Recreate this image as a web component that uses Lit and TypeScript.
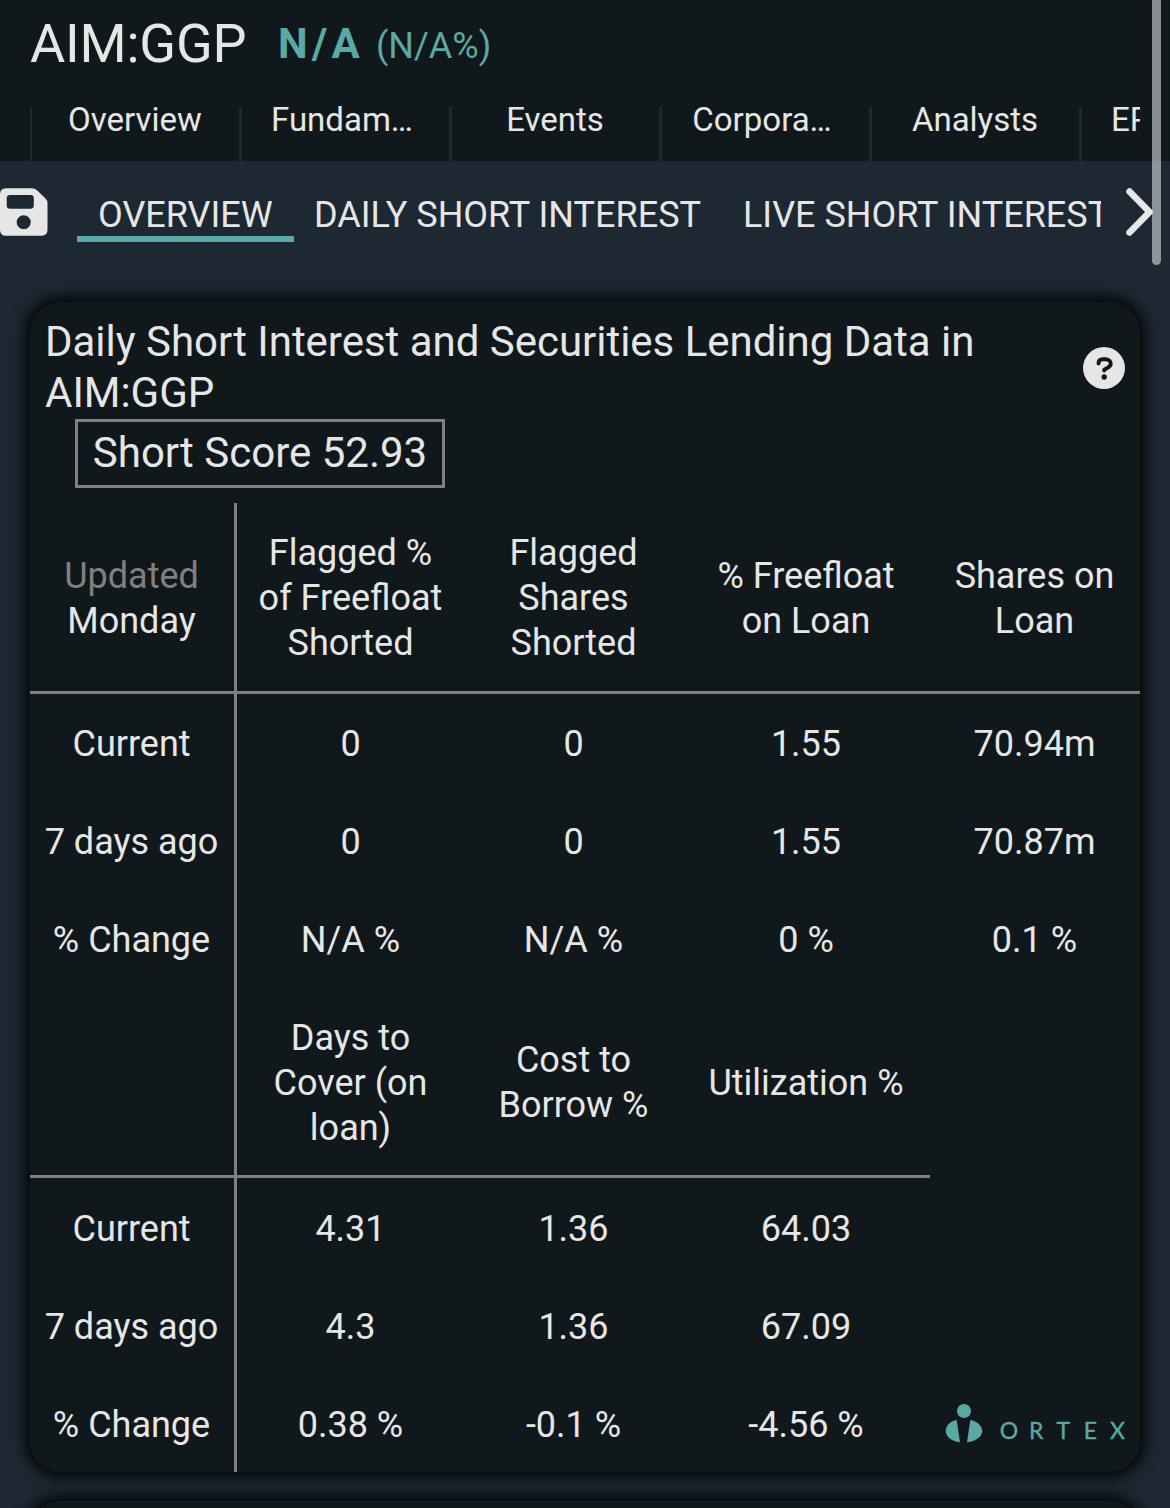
import { LitElement, html, css } from "lit";
import { customElement } from "lit/decorators.js";

const NAV = ["Overview", "Fundam…", "Events", "Corpora…", "Analysts"];

const TOP_HEAD = [
  ["Flagged %", "of Freefloat", "Shorted"],
  ["Flagged", "Shares", "Shorted"],
  ["% Freefloat", "on Loan"],
  ["Shares on", "Loan"],
];
const TOP_ROWS = [
  ["Current", "0", "0", "1.55", "70.94m"],
  ["7 days ago", "0", "0", "1.55", "70.87m"],
  ["% Change", "N/A %", "N/A %", "0 %", "0.1 %"],
];
const BOTTOM_HEAD = [
  ["Days to", "Cover (on", "loan)"],
  ["Cost to", "Borrow %"],
  ["Utilization %"],
];
const BOTTOM_ROWS = [
  ["Current", "4.31", "1.36", "64.03"],
  ["7 days ago", "4.3", "1.36", "67.09"],
  ["% Change", "0.38 %", "-0.1 %", "-4.56 %"],
];

@customElement("short-table")
export class ShortTable extends LitElement {
  static styles = css`
    :host { display: block; }
    .grid {
      display: grid;
      grid-template-columns: 207px 228px 218px 247px 210px;
      font-size: 36px;
      line-height: 45px;
    }
    .cell {
      box-sizing: border-box;
      height: 98px;
      padding-top: 3px;
      padding-right: 1px;
      display: flex;
      flex-direction: column;
      align-items: center;
      justify-content: center;
      text-align: center;
      white-space: nowrap;
    }
    .low { padding-top: 5px; }
    .label { border-right: 3px solid #808080; }
    .head { height: 191px; border-bottom: 3px solid #808080; }
    .head.second { height: 190px; }
    .none { border-bottom-color: transparent; }
    .muted { color: #808080; }
  `;
  head(lines: string[], extra = "") {
    return html`<div class="cell head ${extra}">${lines.map((l) => html`<span>${l}</span>`)}</div>`;
  }
  row(values: string[], extra = "") {
    return [0, 1, 2, 3, 4].map(
      (i) => html`<div class="cell ${extra} ${i === 0 ? "label" : ""}">${values[i] ?? ""}</div>`
    );
  }
  render() {
    return html`<div class="grid">
      <div class="cell head label"><span class="muted">Updated</span><span>Monday</span></div>
      ${TOP_HEAD.map((h) => this.head(h))}
      ${TOP_ROWS.map((r) => this.row(r))}
      <div class="cell head second label"></div>
      ${BOTTOM_HEAD.map((h) => this.head(h, "second"))}
      <div class="cell head second none"></div>
      ${BOTTOM_ROWS.map((r) => this.row(r, "low"))}
    </div>`;
  }
}

@customElement("app-root")
export class AppRoot extends LitElement {
  static styles = css`
    :host {
      display: block;
      position: relative;
      width: 1170px;
      height: 1508px;
      overflow: hidden;
      background: #1d2832;
      color: #e6e6e6;
      font-family: Roboto, "Liberation Sans", sans-serif;
    }
    svg { display: block; flex: none; }
    .top { height: 161px; background: #11181b; }
    .quote { height: 102px; padding-left: 30px; display: flex; align-items: flex-start; white-space: nowrap; }
    .symbol { font-size: 54px; line-height: 87px; width: 248px; letter-spacing: -0.2px; }
    .price { font-size: 42px; line-height: 88px; font-weight: 700; color: #5ba9a4; letter-spacing: 4.2px; width: 98px; }
    .pct { font-size: 36px; line-height: 92px; color: #5ba9a4; }
    .nav { display: flex; height: 59px; margin: 0 30px; overflow: hidden; }
    .nav-edge { flex: none; width: 2px; margin-top: 5px; background: #1d2832; }
    .nav-item { flex: none; display: flex; width: 210px; }
    .nav-text {
      flex: 1;
      padding-right: 1px;
      text-align: center;
      font-size: 33px;
      line-height: 36px;
    }
    .nav-text.cut { padding-right: 7px; }
    .nav-rule { width: 3px; margin-top: 5px; background: #1d2832; }
    .nav-text.partial { text-align: left; padding-left: 29px; }
    .sub { display: flex; height: 141px; padding-top: 27px; box-sizing: border-box; }
    .tabs { display: flex; width: 1024px; margin-left: 29px; overflow: hidden; height: 60px; }
    .tab {
      flex: none;
      box-sizing: border-box;
      height: 54px;
      font-size: 36px;
      line-height: 54px;
      padding: 0 21px;
      white-space: nowrap;
    }
    .tab.active { width: 217px; margin-right: -1px; border-bottom: 6px solid #5ba9a4; }
    .next { margin-left: 25px; }
    .card {
      position: relative;
      box-sizing: border-box;
      margin: 0 30px 29px;
      height: 1170px;
      border-radius: 30px;
      background: #11181b;
      box-shadow: 0 0 15px 4px #000;
    }
    .card-head { display: flex; height: 117px; padding: 14px 15px 0; box-sizing: border-box; justify-content: space-between; }
    .title { font-size: 42px; line-height: 51px; letter-spacing: -0.02px; white-space: nowrap; }
    .help { margin-top: 31px; }
    .score {
      box-sizing: border-box;
      width: 370px;
      height: 69px;
      margin: 0 0 15px 45px;
      border: 3px solid #808080;
      text-align: center;
      font-size: 42px;
      line-height: 62px;
      white-space: nowrap;
    }
    .brand { position: absolute; right: 9px; bottom: 28px; display: flex; align-items: flex-end; }
    .word {
      display: flex;
      font-family: Lato, sans-serif;
      color: #5ba9a4;
      font-size: 23px;
      line-height: 24px;
      -webkit-text-stroke: 0.4px #5ba9a4;
      margin: 0 0 2px 12.5px;
    }
    .word span { width: 27.1px; text-align: center; }
    .thumb {
      position: absolute;
      top: -10px;
      left: 1152px;
      width: 9px;
      height: 275px;
      border-radius: 5px;
      background: rgba(255, 255, 255, 0.5);
    }
  `;
  render() {
    return html`
      <div class="top">
        <div class="quote">
          <span class="symbol">AIM:GGP</span><span class="price">N/A</span><span class="pct">(N/A%)</span>
        </div>
        <div class="nav">
          <div class="nav-edge"></div>
          ${NAV.map(
            (n) => html`<div class="nav-item">
              <div class="nav-text ${n.endsWith("…") ? "cut" : ""}">${n}</div>
              <div class="nav-rule"></div>
            </div>`
          )}
          <div class="nav-item"><div class="nav-text partial">EPS</div></div>
        </div>
      </div>
      <div class="sub">
        <svg width="48" height="48" viewBox="0 0 48 48">
          <path fill="#e6e6e6" fill-rule="evenodd" d="M6 0.300H32Q35 0.300 37 2.300L45.500 10.500Q47.500 12.500 47.500 15V42Q47.500 47.700 41.500 47.700H6Q0 47.700 0 41.700V6.300Q0 0.300 6 0.300ZM10 7Q6.700 7 6.700 10V17.500Q6.700 20.800 10 20.800H30.500Q33.800 20.800 33.800 17.500V10Q33.800 7 30.500 7ZM23.700 27.200a7 7 0 1 0 0 14a7 7 0 1 0 0-14Z"></path>
        </svg>
        <div class="tabs">
          <div class="tab active">OVERVIEW</div>
          <div class="tab">DAILY SHORT INTEREST</div>
          <div class="tab">LIVE SHORT INTEREST</div>
        </div>
        <svg class="next" width="28" height="48" viewBox="0 0 28 48">
          <path d="M3.500 3.500L23.500 24L3.500 44.500" fill="none" stroke="#e6e6e6" stroke-width="6.600" stroke-linecap="round" stroke-linejoin="round"></path>
        </svg>
      </div>
      <div class="card">
        <div class="card-head">
          <div class="title">Daily Short Interest and Securities Lending Data in<br />AIM:GGP</div>
          <svg class="help" width="42" height="42" viewBox="0 0 42 42">
            <circle cx="21" cy="21" r="21" fill="#e6e6e6"></circle>
            <path d="M15.500 16.500C15.500 13.500 17.500 12.300 20 12.300H22.500C25.500 12.300 27.700 14 27.700 16.500C27.700 18.500 26.700 19.500 25 20.500L21.200 22.700V23.500" fill="none" stroke="#11181b" stroke-width="3.900" stroke-linecap="round" stroke-linejoin="round"></path>
            <circle cx="21.200" cy="30" r="2.700" fill="#11181b"></circle>
          </svg>
        </div>
        <div class="score">Short Score 52.93</div>
        <short-table></short-table>
        <div class="brand">
          <svg width="38" height="40" viewBox="0 0 38 40" fill="#5ba9a4">
            <circle cx="19" cy="7" r="7"></circle>
            <path d="M11.700 16L15 38.200C6.500 37.500 0.800 32.500 0.800 27C0.800 21.500 5.200 17.300 11.700 16ZM25.300 16C32 17.300 37.200 21.500 37.200 27C37.200 32.500 31 37.500 22 38.200Z"></path>
          </svg>
          <div class="word">${[..."ORTEX"].map((c) => html`<span>${c}</span>`)}</div>
        </div>
      </div>
      <div class="card"></div>
      <div class="thumb"></div>
    `;
  }
}
